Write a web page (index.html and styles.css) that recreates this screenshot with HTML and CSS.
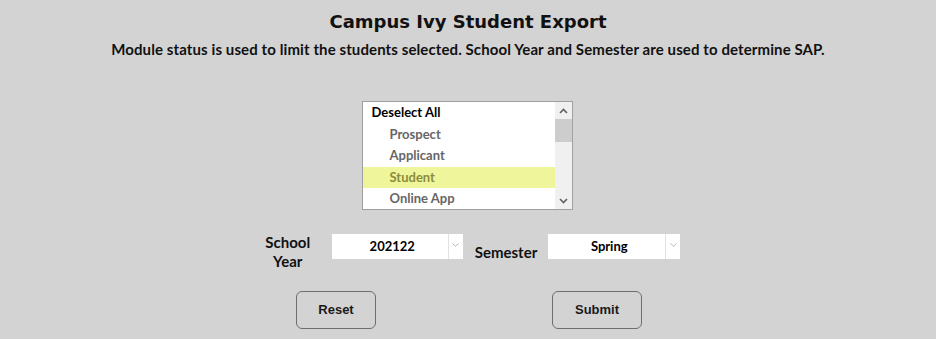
FILE: index.html
```html
<!DOCTYPE html>
<html lang="en">
<head>
  <meta charset="UTF-8" />
  <meta name="viewport" content="width=device-width, initial-scale=1.0"/>
  <title>Campus Ivy Student Export</title>
  <link rel="stylesheet" href="styles.css">
</head>
<body>

  <!-- heading -->
  <h1 class="title">Campus Ivy Student Export</h1>
  <p class="note">Module status is used to limit the students selected. School Year and Semester are used to determine SAP.</p>

  <!-- module status list -->
  <div class="status-box">
    <ul class="status-list">
      <li class="status-all">Deselect All</li>
      <li>Prospect</li>
      <li>Applicant</li>
      <li class="selected">Student</li>
      <li>Online App</li>
    </ul>
    <div class="scrollbar">
      <span class="arrow">
        <svg width="9" height="6" viewBox="0 0 9 6"><path d="M1 5 L4.5 1.5 L8 5" fill="none" stroke="#606060" stroke-width="1.6"/></svg>
      </span>
      <div class="track"><div class="thumb"></div></div>
      <span class="arrow">
        <svg width="9" height="6" viewBox="0 0 9 6"><path d="M1 1 L4.5 4.5 L8 1" fill="none" stroke="#606060" stroke-width="1.6"/></svg>
      </span>
    </div>
  </div>

  <!-- year / semester -->
  <div class="terms">
    <label class="term-label year-label">School Year</label>
    <div class="dropdown">
      <span class="dropdown-value">202122</span>
      <span class="dropdown-arrow">
        <svg width="7" height="4" viewBox="0 0 7 4"><path d="M0.5 0.5 L3.5 3.2 L6.5 0.5" fill="none" stroke="#b5b5b5" stroke-width="1"/></svg>
      </span>
    </div>
    <label class="term-label sem-label">Semester</label>
    <div class="dropdown wide">
      <span class="dropdown-value">Spring</span>
      <span class="dropdown-arrow">
        <svg width="7" height="4" viewBox="0 0 7 4"><path d="M0.5 0.5 L3.5 3.2 L6.5 0.5" fill="none" stroke="#b5b5b5" stroke-width="1"/></svg>
      </span>
    </div>
  </div>

  <!-- buttons -->
  <div class="actions">
    <button class="action-btn reset" type="button">Reset</button>
    <button class="action-btn" type="button">Submit</button>
  </div>

</body>
</html>
```

FILE: styles.css
```css
body {
  margin: 0;
  padding: 0;
  background: #d3d3d3;
  font-family: Lato, "Noto Sans", sans-serif;
  color: #111;
}

.title {
  margin: 11px 0 0;
  font-family: "DejaVu Sans", sans-serif;
  font-size: 18px;
  line-height: 22px;
  font-weight: bold;
  text-align: center;
}

.note {
  margin: 7px 0 0;
  font-size: 15px;
  line-height: 18px;
  letter-spacing: 0.1px;
  font-weight: bold;
  text-align: center;
}

.status-box {
  display: flex;
  width: 209px;
  height: 107px;
  margin: 43px auto 0;
  border: 1px solid #a0a0a0;
  background: #fff;
  position: relative;
  left: -1px;
}

.status-list {
  list-style: none;
  margin: 0;
  padding: 0;
  flex: 1;
  overflow: hidden;
}

.status-list li {
  height: 21.5px;
  line-height: 21.5px;
  padding-left: 27px;
  font-size: 13px;
  font-weight: bold;
  color: #666;
}

.status-list .status-all {
  padding-left: 9px;
  color: #000;
}

.status-list .selected {
  background: #eef59b;
  color: #8c8c3e;
}

.scrollbar {
  width: 17px;
  display: flex;
  flex-direction: column;
  background: #f0f0f0;
}

.scrollbar .arrow {
  height: 17px;
  display: flex;
  align-items: center;
  justify-content: center;
}

.scrollbar .track {
  flex: 1;
}

.scrollbar .thumb {
  height: 23px;
  background: #cdcdcd;
}

.terms {
  display: flex;
  justify-content: center;
  align-items: center;
  padding-left: 9px;
  margin-top: 23px;
}

.term-label {
  font-size: 15px;
  font-weight: bold;
  line-height: 19px;
  text-align: center;
}

.year-label {
  width: 46px;
  margin-right: 21px;
}

.sem-label {
  margin: 0 11px 0 12px;
}

.dropdown {
  align-self: flex-start;
  margin-top: 1px;
  display: flex;
  width: 131px;
  height: 25px;
  background: #fff;
}

.dropdown.wide {
  width: 132px;
}

.dropdown-value {
  flex: 1;
  text-align: center;
  line-height: 25px;
  font-size: 13px;
  font-weight: bold;
  color: #000;
  padding-left: 5px;
}

.dropdown-arrow {
  width: 15px;
  border-left: 1px solid #e2e2e2;
  display: flex;
  justify-content: center;
  padding-top: 9px;
  box-sizing: border-box;
}

.actions {
  display: flex;
  justify-content: center;
  gap: 176px;
  margin-top: 20px;
  padding-left: 2px;
}

.action-btn {
  height: 38px;
  width: 90px;
  padding: 0 0 2px;
  background: transparent;
  border: 1px solid #6e6e6e;
  border-radius: 6px;
  font-family: "Liberation Sans", Arial, sans-serif;
  font-size: 13px;
  font-weight: bold;
  color: #1a1a1a;
}

.action-btn.reset {
  width: 80px;
}
```
